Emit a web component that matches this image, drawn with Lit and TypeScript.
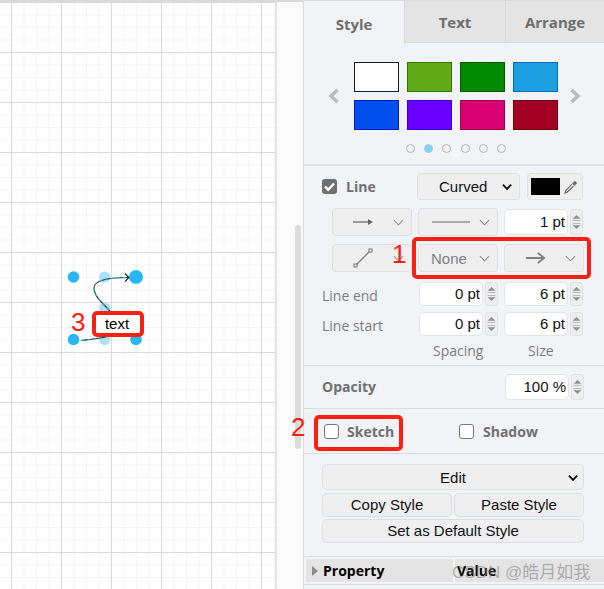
import { LitElement, html, css } from "lit";
import { customElement } from "lit/decorators.js";

const chevron = html`<svg class="chev" viewBox="0 0 12 7" width="11" height="7"><path d="M1 1l5 5 5-5" fill="none" stroke="#8a8a8a" stroke-width="1.1"/></svg>`;
const darkChevron = html`<svg class="chev" viewBox="0 0 12 8" width="11" height="8"><path d="M1 1.5l4.5 4.5 4.5-4.5" fill="none" stroke="#111" stroke-width="2"/></svg>`;
const spinner = html`<div class="spin"><svg viewBox="0 0 14 26" width="12" height="24"><path d="M7 4l5 5H2z" fill="#8f8f8f"/><path d="M2 11h10M2 15h10" stroke="#a8a8a8" stroke-width="1"/><path d="M2 17h10l-5 5z" fill="#8f8f8f"/></svg></div>`;

const swatches = [
  ["#ffffff", "#1a1a1a"], ["#60a917", "#2d7600"], ["#008a00", "#005700"], ["#1ba1e2", "#006eaf"],
  ["#0050ef", "#001dbc"], ["#6a00ff", "#3700cc"], ["#d80073", "#a50040"], ["#a20025", "#6f0000"],
];

@customElement("app-root")
export class AppRoot extends LitElement {
  static styles = css`
    :host { display: block; width: 604px; height: 589px; overflow: hidden; position: relative; font-family: "Liberation Sans", sans-serif; }
    * { box-sizing: border-box; }
    .root { display: flex; width: 604px; height: 589px; }
    .canvas {
      width: 275px; height: 589px; flex: none; position: relative; background-color: #fff;
      border-top: 2px solid #d9d9d9;
      background-image:
        linear-gradient(to right, #dadada 1px, transparent 1px),
        linear-gradient(to bottom, #dadada 1px, transparent 1px),
        linear-gradient(to right, #f5f5f5 1px, transparent 1px),
        linear-gradient(to bottom, #f5f5f5 1px, transparent 1px);
      background-size: 50px 50px, 50px 50px, 12.5px 12.5px, 12.5px 12.5px;
      background-position: 11px 0, 0 0, 11px 0, 0 0;
    }
    .canvas svg { position: absolute; left: 0; top: -2px; }
    .gutter { width: 28px; flex: none; height: 589px; background: #fbfbfb; border-left: 2px solid #e4e4e4; border-top: 2px solid #d9d9d9; padding: 223px 0 0 18px; }
    .thumb { width: 6px; height: 224px; border-radius: 3px; background: #dcdcdc; }
    .panel { width: 301px; flex: none; height: 589px; background: #f1f3f6; border-left: 1px solid #d8dade; color: #707070; font-family: "Open Sans", sans-serif; display: flex; flex-direction: column; }

    .tabs { display: flex; height: 43px; flex: none; border-top: 1px solid #d9d9d9; font-weight: 700; font-size: 15px; }
    .tab { display: flex; align-items: center; justify-content: center; background: #e4e4e4; border-bottom: 1px solid #dadada; border-left: 1px solid #dadada; color: #6e6e6e; padding-top: 1px; }
    .tab.on { background: #f1f3f6; border-bottom: none; border-left: none; width: 100px; padding-top: 3px; }
    .tab.t { width: 101px; }
    .tab.a { width: 99px; }

    .palette { height: 123px; flex: none; border-bottom: 2px solid #dfe1e5; display: flex; flex-direction: column; align-items: center; padding-top: 19px; }
    .pal-row { display: flex; align-items: center; }
    .arrow { width: 14px; height: 16px; display: block; margin: 0; }
    .grid { display: grid; grid-template-columns: repeat(4, 45px); grid-auto-rows: 30px; gap: 8px; margin: 0 10px 0 13px; }
    .sw { border: 1px solid; }
    .dots { display: flex; gap: 9.2px; margin: 14px 0 0 4px; }
    .dot { width: 9px; height: 9px; border-radius: 50%; border: 1px solid #b5b5b5; }
    .dot.on { background: #83d4fb; border-color: #aac9d8; }

    .section { flex: none; border-bottom: 1px solid #dadce0; }
    .line { height: 200px; padding-top: 7px; display: flex; flex-direction: column; }
    .row { display: flex; align-items: center; }
    .r1 { height: 27px; padding-left: 18px; }
    .r2 { height: 28px; margin-top: 8px; padding-left: 28px; gap: 6px; }
    .r3 { height: 28px; margin-top: 8px; padding-left: 28px; gap: 6px; }
    .r4 { height: 24px; padding-left: 18px; }
    .r4.first { margin-top: 10px; }
    .r4.second { margin-top: 6px; }
    .r5 { margin-top: 4px; font-size: 14px; color: #7d7d7d; height: 20px; }
    .sp { width: 101px; padding-left: 32px; }
    .sz { padding-left: 26px; }

    .cb { width: 15px; height: 15px; border-radius: 3px; flex: none; }
    .cb.on { background: #707070; display: flex; align-items: center; justify-content: center; }
    .cb.off { border: 1px solid #767676; background: #fff; }
    .bold { font-weight: 700; font-size: 14px; color: #707070; }
    .lbl-line { width: 80px; padding-left: 9px; }
    .lbl { width: 97px; font-size: 14px; color: #7d7d7d; padding-top: 2px; }

    .sel { height: 100%; border: 1px solid #dedfe3; border-radius: 4px; background: #efefef; display: flex; align-items: center; justify-content: space-between; padding: 0 7px 0 20px; flex: none; }
    .w80 { width: 80px; }
    .pad13 { padding-left: 13px; }
    .curved { width: 103px; height: 27px; color: #111; font: 15px "Liberation Sans", sans-serif; padding: 0 6px 0 21px; }
    .none { color: #808080; font: 15px "Liberation Sans", sans-serif; padding-left: 12px; }
    .color { width: 56px; height: 27px; margin-left: 7px; border: 1px solid #dedfe3; border-radius: 4px; background: #efefef; display: flex; align-items: center; padding-left: 3px; gap: 3px; }
    .black { width: 29px; height: 17px; background: #000; }
    .input { height: 100%; width: 64px; background: #fff; border: 1px solid #e3e4e7; border-radius: 5px; color: #111; font: 15px "Liberation Sans", sans-serif; display: flex; align-items: center; justify-content: flex-end; padding: 0 2px 1px 0; flex: none; }
    .spin { width: 13px; height: 100%; margin-left: 2px; border: 1px solid #e0e1e4; border-radius: 3px; background: #efefef; flex: none; display: flex; align-items: center; justify-content: center; overflow: hidden; }
    .pair { display: flex; align-items: center; height: 100%; }
    .r2 .pair .input, .r2 .pair .spin { height: 26px; }
    .pair + .pair { margin-left: 6px; }

    .opacity { height: 43px; padding: 0 20px 0 18px; display: flex; align-items: center; justify-content: space-between; }
    .opacity .bold { margin-top: -2px; }
    .opacity .pair { height: 26px; }
    .checks { height: 45px; border-bottom: 1px solid #dadce0; flex: none; display: flex; align-items: center; padding: 1px 0 0 20px; }
    .chk { display: flex; align-items: center; gap: 8px; }
    .chk.s { width: 135px; }
    .chk.h { gap: 9px; }

    .actions { height: 103px; flex: none; border-bottom: 1px solid #dadce0; padding: 10px 20px 0 18px; display: flex; flex-direction: column; gap: 2px; }
    .btn { border: 1px solid #dedfe3; border-radius: 5px; background: #efefef; color: #111; font: 15px "Liberation Sans", sans-serif; display: flex; align-items: center; justify-content: center; height: 24px; padding-bottom: 1px; position: relative; }
    .edit { height: 26px; margin-bottom: 1px; padding-bottom: 0; }
    .edit .chev { position: absolute; right: 4px; top: 9px; }
    .two { display: flex; gap: 2px; }
    .two .btn { flex: 1; }

    .props { height: 28px; flex: none; border-bottom: 1px solid #dadce0; padding: 2px 0 0 2px; display: flex; gap: 2px; color: #000; font-weight: 700; font-size: 14px; }
    .prop { height: 23px; background: #e4e4e4; display: flex; align-items: center; width: 147px; gap: 5px; padding-left: 6px; }
    .val { height: 23px; background: #e4e4e4; flex: 1; display: flex; align-items: center; padding-left: 2px; }
    .tri { width: 0; height: 0; border-left: 6px solid #8d8d8d; border-top: 5px solid transparent; border-bottom: 5px solid transparent; }

    .mark { position: absolute; border: 4px solid #fb2011; border-radius: 5px; }
    .m1 { left: 412px; top: 237px; width: 179px; height: 42px; }
    .m2 { left: 314px; top: 415px; width: 89px; height: 36px; }
    .m3 { left: 92px; top: 311px; width: 52px; height: 26px; background: #fff; color: #000; font-size: 15px; display: flex; align-items: center; justify-content: center; padding: 0 2px 1px 0; }
    .num { position: absolute; color: #fb2011; font-size: 26px; line-height: 30px; }
    .n1 { left: 392px; top: 239px; }
    .n2 { left: 291px; top: 412px; }
    .n3 { left: 71px; top: 307px; }
    .wm { position: absolute; left: 452px; top: 558px; font: 17px "Liberation Sans", "Noto Sans CJK SC", sans-serif; color: rgba(120,120,120,.55); white-space: nowrap; }
  `;

  render() {
    return html`
      <div class="root">
        <div class="canvas">
          <svg width="275" height="589" viewBox="0 0 275 589">
            <g fill="#29b6f2">
              <circle cx="73.5" cy="277" r="5.8"/>
              <circle cx="136" cy="277" r="7"/>
              <circle cx="73.5" cy="339.5" r="5.8"/>
              <circle cx="136" cy="339.5" r="5.8"/>
            </g>
            <g fill="#a9e0fa">
              <circle cx="104.7" cy="277" r="5.6"/>
              <circle cx="104.7" cy="308" r="5.6"/>
              <circle cx="104.7" cy="339.5" r="5.6"/>
            </g>
            <g fill="none">
              <path d="M81 340.5C95 339 108 338 113 333C121 325 115 316 108 309C100 301 94 295 94 288C94 280 108 277.5 129 277.5" stroke="#1b2530" stroke-width="1.1"/>
              <path d="M81 340.5C95 339 108 338 113 333C121 325 115 316 108 309C100 301 94 295 94 288C94 280 108 277.5 129 277.5" stroke="#29b6f2" stroke-width="1" stroke-dasharray="3 3"/>
              <path d="M125 273.5l4 4-4 4" stroke="#1b2530" stroke-width="1.1"/>
            </g>
          </svg>
        </div>
        <div class="gutter"><div class="thumb"></div></div>
        <div class="panel">
          <div class="tabs">
            <div class="tab on">Style</div>
            <div class="tab t">Text</div>
            <div class="tab a">Arrange</div>
          </div>
          <div class="palette">
            <div class="pal-row">
              <svg class="arrow" viewBox="0 0 14 16"><path d="M10.5 2L4 8l6.5 6" fill="none" stroke="#b8bcc0" stroke-width="3.5"/></svg>
              <div class="grid">
                ${swatches.map(([b, c]) => html`<div class="sw" style="background:${b};border-color:${c}"></div>`)}
              </div>
              <svg class="arrow" viewBox="0 0 14 16"><path d="M3.5 2L10 8l-6.5 6" fill="none" stroke="#b8bcc0" stroke-width="3.5"/></svg>
            </div>
            <div class="dots">
              <div class="dot"></div><div class="dot on"></div><div class="dot"></div><div class="dot"></div><div class="dot"></div><div class="dot"></div>
            </div>
          </div>

          <div class="section line">
            <div class="row r1">
              <div class="cb on"><svg viewBox="0 0 15 15" width="15" height="15"><path d="M3 7.5l3.2 3.2L12 4.5" fill="none" stroke="#fff" stroke-width="2.4"/></svg></div>
              <div class="bold lbl-line">Line</div>
              <div class="sel curved">Curved ${darkChevron}</div>
              <div class="color">
                <div class="black"></div>
                <svg viewBox="0 0 16 16" width="16" height="16"><path d="M9.5 4l2.5 2.5M9 5l-6 6.5L2 14l2.5-1L10.500 7" fill="none" stroke="#666" stroke-width="1.1"/><path d="M10 3.5l2-1.500 2 2-1.500 2z" fill="#666"/></svg>
              </div>
            </div>
            <div class="row r2">
              <div class="sel w80"><svg viewBox="0 0 20 10" width="20" height="10"><path d="M0 5h18" stroke="#666" stroke-width="1.2"/><path d="M15 2l5 3-5 3z" fill="#666"/></svg>${chevron}</div>
              <div class="sel w80 pad13"><svg viewBox="0 0 38 4" width="38" height="4"><path d="M0 2h38" stroke="#666" stroke-width="1"/></svg>${chevron}</div>
              <div class="pair"><div class="input">1 pt</div>${spinner}</div>
            </div>
            <div class="row r3">
              <div class="sel w80"><svg viewBox="0 0 20 20" width="20" height="20"><path d="M3 17L17 3" stroke="#777" stroke-width="1.2"/><rect x="1" y="16" width="3" height="3" fill="#efefef" stroke="#777"/><rect x="16" y="1" width="3" height="3" fill="#efefef" stroke="#777"/></svg>${chevron}</div>
              <div class="sel w80 none">None ${chevron}</div>
              <div class="sel w80"><svg viewBox="0 0 24 14" width="22" height="14"><path d="M1 7h20M14 1.500L21 7l-7 5.500" fill="none" stroke="#808080" stroke-width="2"/></svg>${chevron}</div>
            </div>
            <div class="row r4 first">
              <div class="lbl">Line end</div>
              <div class="pair"><div class="input">0 pt</div>${spinner}</div>
              <div class="pair"><div class="input">6 pt</div>${spinner}</div>
            </div>
            <div class="row r4 second">
              <div class="lbl">Line start</div>
              <div class="pair"><div class="input">0 pt</div>${spinner}</div>
              <div class="pair"><div class="input">6 pt</div>${spinner}</div>
            </div>
            <div class="row r5">
              <div class="lbl"></div><div class="sp">Spacing</div><div class="sz">Size</div>
            </div>
          </div>

          <div class="section opacity">
            <div class="bold">Opacity</div>
            <div class="pair"><div class="input">100 %</div>${spinner}</div>
          </div>

          <div class="checks">
            <div class="chk s"><div class="cb off"></div><div class="bold">Sketch</div></div>
            <div class="chk h"><div class="cb off"></div><div class="bold">Shadow</div></div>
          </div>

          <div class="actions">
            <div class="btn edit">Edit ${darkChevron}</div>
            <div class="two"><div class="btn">Copy Style</div><div class="btn">Paste Style</div></div>
            <div class="btn">Set as Default Style</div>
          </div>

          <div class="props">
            <div class="prop"><div class="tri"></div>Property</div>
            <div class="val">Value</div>
          </div>
        </div>
      </div>
      <div class="mark m1"></div>
      <div class="mark m2"></div>
      <div class="mark m3">text</div>
      <div class="num n1">1</div>
      <div class="num n2">2</div>
      <div class="num n3">3</div>
      <div class="wm">CSDN @皓月如我</div>
    `;
  }
}
